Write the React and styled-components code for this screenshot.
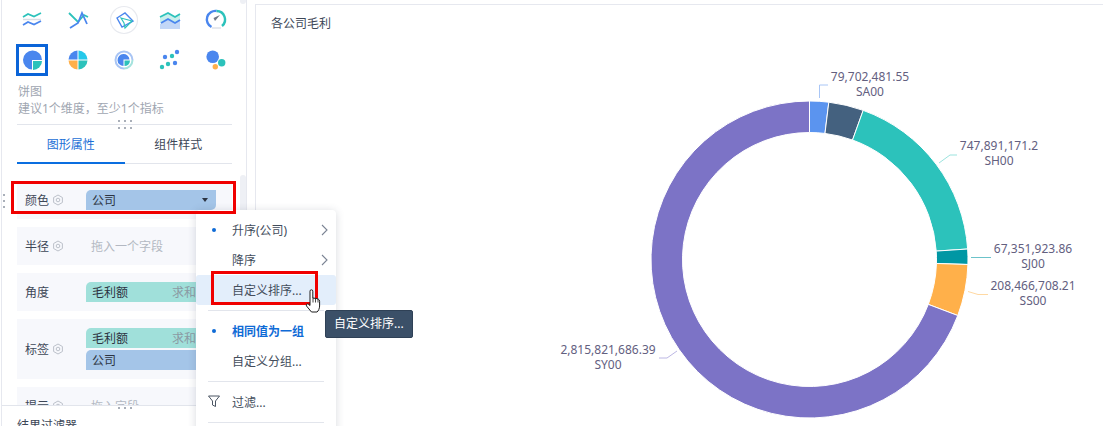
import React from 'react';
import styled, { createGlobalStyle } from 'styled-components';

const GlobalStyle = createGlobalStyle`
  html, body {
    margin: 0;
    padding: 0;
    background: #fff;
    font-family: "Noto Sans", "Noto Sans CJK SC", sans-serif;
    font-size: 12px;
    color: #333d4d;
  }
`;

const Page = styled.div`
  position: relative;
  display: flex;
  width: 1103px;
  height: 426px;
  overflow: hidden;
`;

const Panel = styled.aside`
  position: relative;
  display: flex;
  flex-direction: column;
  flex: none;
  box-sizing: border-box;
  width: 246px;
  height: 426px;
  margin-left: 1px;
  border-left: 1px solid #e6e8ef;
  border-right: 1px solid #e6e8ef;
`;

const IconGrid = styled.div`
  display: grid;
  grid-template-columns: repeat(5, 46px);
  grid-auto-rows: 40px;
  flex: none;
  padding-left: 7px;
`;

const IconCell = styled.div`
  display: flex;
  align-items: center;
  justify-content: center;
`;

const IconFrame = styled.div`
  display: flex;
  align-items: center;
  justify-content: center;
  box-sizing: border-box;
  width: 32px;
  height: 32px;
  border: ${p => (p.$selected ? '3px solid #0a64d8' : '0')};
`;

const Hint = styled.div`
  flex: none;
  padding: 3px 0 0 16px;
  line-height: 17px;
  color: #a0a6b1;
`;

const Divider = styled.div`
  flex: none;
  height: 1px;
  margin: 7px 14px 0 15px;
  background: #e2e5ec;
`;

const Tabs = styled.div`
  display: flex;
  flex: none;
  height: 39px;
  margin: 0 14px 0 15px;
  border-bottom: 1px solid #e2e5ec;
  box-sizing: border-box;
`;

const Tab = styled.div`
  flex: 1;
  margin-bottom: -1px;
  line-height: 39px;
  text-align: center;
  color: ${p => (p.$active ? '#1c6fd6' : '#3d4757')};
  border-bottom: 2px solid ${p => (p.$active ? '#0a6ee0' : 'transparent')};
`;

const Fields = styled.div`
  display: flex;
  flex: 1;
  flex-direction: column;
  gap: 8px;
  min-height: 0;
  padding-top: 17px;
  overflow: hidden;
`;

const FieldRow = styled.div`
  display: flex;
  flex: none;
  align-items: center;
  min-height: 20px;
  margin: 0 14px 0 15px;
  padding: 9px 0;
  background: #f7f8fc;
`;

const FieldLabel = styled.div`
  display: flex;
  flex: none;
  align-items: center;
  gap: 3px;
  box-sizing: border-box;
  width: 69px;
  padding-left: 8px;
  color: #3d4757;
`;

const PillStack = styled.div`
  display: flex;
  flex-direction: column;
  gap: 2px;
`;

const Pill = styled.div`
  display: flex;
  align-items: center;
  box-sizing: border-box;
  width: 130px;
  height: 20px;
  padding: 0 6px;
  border-radius: 5px 0 5px 0;
  background: ${p => (p.$kind === 'measure' ? '#a0e0da' : '#a4c5e8')};
  color: #2c3442;
`;

const PillSuffix = styled.span`
  margin-left: auto;
  padding-right: 14px;
  color: #8b9aa3;
`;

const Caret = styled.span`
  width: 0;
  height: 0;
  margin-left: auto;
  margin-right: 2px;
  border-left: 3px solid transparent;
  border-right: 3px solid transparent;
  border-top: 4px solid #2c3442;
`;

const Placeholder = styled.span`
  margin-left: 5px;
  color: #b3b8c2;
`;

const Footer = styled.div`
  flex: none;
  box-sizing: border-box;
  height: 21px;
  padding: 11px 0 0 15px;
  border-top: 1px solid #e2e5ec;
  background: #fff;
  line-height: 17px;
  color: #3d4757;
`;

const ScrollThumb = styled.div`
  position: absolute;
  left: 238px;
  top: ${p => p.$top}px;
  width: 6px;
  height: ${p => p.$height}px;
  border-radius: 3px;
  background: #eef0f5;
`;

const DotHandle = styled.div`
  position: absolute;
  left: ${p => p.$left}px;
  top: ${p => p.$top}px;
  display: flex;
  flex-direction: ${p => (p.$vertical ? 'column' : 'row')};
  gap: 4px;
  & > i {
    display: block;
    width: 2px;
    height: 2px;
    background: #a9afb9;
  }
`;

const Card = styled.main`
  flex: none;
  box-sizing: border-box;
  width: 860px;
  height: 440px;
  margin: 4px 0 0 8px;
  border: 1px solid #e6e8ef;
`;

const CardTitle = styled.div`
  height: 35px;
  padding: 10px 0 0 15px;
  box-sizing: border-box;
  line-height: 17px;
  color: #3d4757;
`;

const ChartSvg = styled.svg`
  display: block;
`;

const ChartLabel = styled.text`
  font-family: "Noto Sans", "Noto Sans CJK SC", sans-serif;
  font-size: 12px;
  fill: #63607f;
  text-anchor: middle;
`;

const Menu = styled.div`
  position: absolute;
  left: 196px;
  top: 210px;
  box-sizing: border-box;
  width: 140px;
  height: 230px;
  padding: 5px 0;
  border-radius: 4px;
  background: #fff;
  box-shadow: 0 1px 8px rgba(60, 70, 90, 0.2);
`;

const MenuItem = styled.div`
  position: relative;
  display: flex;
  align-items: center;
  height: 30px;
  padding-left: 36px;
  border-radius: 3px;
  background: ${p => (p.$hover ? '#e3eefb' : 'transparent')};
  color: ${p => (p.$on ? '#0f6bd6' : '#434d5c')};
  font-weight: ${p => (p.$on ? 700 : 400)};
`;

const MenuDot = styled.span`
  position: absolute;
  left: 16px;
  top: 13px;
  width: 4px;
  height: 4px;
  border-radius: 50%;
  background: #0f6bd6;
`;

const MenuLead = styled.span`
  position: absolute;
  left: 11px;
  top: 7px;
  display: flex;
`;

const MenuArrow = styled.span`
  position: absolute;
  left: 125px;
  top: 9px;
  display: flex;
`;

const MenuRule = styled.div`
  height: 1px;
  margin: 5px 12px 5px 12px;
  background: #e2e5ec;
`;

const Tip = styled.div`
  position: absolute;
  left: 325px;
  top: 310px;
  box-sizing: border-box;
  width: 88px;
  height: 28px;
  padding-left: 8px;
  border: 1px solid #2f4156;
  border-radius: 2px;
  background: #3b5068;
  color: #fff;
  line-height: 26px;
`;

const RedBox = styled.div`
  position: absolute;
  left: ${p => p.$left}px;
  top: ${p => p.$top}px;
  box-sizing: border-box;
  width: ${p => p.$width}px;
  height: ${p => p.$height}px;
  border: 3px solid #f00000;
`;

const CursorWrap = styled.div`
  position: absolute;
  left: 305px;
  top: 288px;
  display: flex;
`;

const Dots = ({ left, top, vertical }) => (
  <DotHandle $left={left} $top={top} $vertical={vertical}>
    <i /><i /><i />
  </DotHandle>
);

const Gear = () => (
  <svg width="12" height="12" viewBox="0 0 12 12" fill="none" stroke="#bcc1ca" strokeWidth="1">
    <path d="M6 1l4.400 2.500v5L6 11 1.600 8.500v-5z" />
    <circle cx="6" cy="6" r="1.800" />
  </svg>
);

const LineIcon = () => (
  <svg width="30" height="30" viewBox="0 0 30 30" fill="none" strokeWidth="1.800">
    <path d="M6 12l5-3 6 2.500 7-3.500" stroke="#2cc2bb" />
    <path d="M6 14.500h18" stroke="#d8dce4" strokeWidth="1.500" />
    <path d="M6 20l5-3 6 2.500 7-3.500" stroke="#4a86ee" />
  </svg>
);

const ParallelIcon = () => (
  <svg width="30" height="30" viewBox="0 0 30 30" fill="none" strokeWidth="1.800">
    <path d="M6 8l9 9 6-7 4 2" stroke="#2cc2bb" />
    <path d="M7 23l8-5 4-10 5 11" stroke="#4a86ee" />
  </svg>
);

const RadarIcon = () => (
  <svg width="30" height="30" viewBox="0 0 30 30" fill="none">
    <circle cx="15" cy="15" r="13.500" stroke="#e8eaef" strokeWidth="1.200" />
    <path d="M8 13l8-5 8 8-11 6z" stroke="#4a86ee" strokeWidth="1.400" />
    <path d="M12 13l11 3-7 7-1-5z" stroke="#2cc2bb" strokeWidth="1.200" />
  </svg>
);

const AreaIcon = () => (
  <svg width="30" height="30" viewBox="0 0 30 30" fill="none">
    <path d="M5 12l8-4 7 4 5-3v7l-5 2-7-4-8 4z" fill="#c8efec" />
    <path d="M5 19l8-5 7 4 5-3v9H5z" fill="#c2d7f7" />
    <path d="M5 12l8-4 7 4 5-3" stroke="#2cc2bb" strokeWidth="1.800" />
    <path d="M6 18l7-4 7 4 5-3" stroke="#4a86ee" strokeWidth="1.800" />
  </svg>
);

const GaugeIcon = () => (
  <svg width="30" height="30" viewBox="0 0 30 30" fill="none">
    <path d="M10.500 22A8.500 8.500 0 0 1 15.500 6" stroke="#4a86ee" strokeWidth="2.400" />
    <path d="M15.500 6a8.500 8.500 0 0 1 5.500 15" stroke="#2cc2bb" strokeWidth="2.400" />
    <path d="M19 10l-6.500 3 1.500 3z" fill="#6e7885" />
    <path d="M11 23h9" stroke="#dfe2e9" strokeWidth="1.500" />
  </svg>
);

const PieIcon = () => (
  <svg width="26" height="26" viewBox="0 0 26 26">
    <path d="M13 13v9.500A9.500 9.500 0 1 1 23 13z" fill="#4a86ee" />
    <path d="M14 14h9a9 9 0 0 1-9 9z" fill="#2cc2bb" />
  </svg>
);

const QuadIcon = () => (
  <svg width="30" height="30" viewBox="0 0 30 30">
    <path d="M14.500 14.500V5.500a9.500 9.500 0 0 0-9 9z" fill="#4a86ee" />
    <path d="M15.500 14.500V5.500a9.500 9.500 0 0 1 9 9z" fill="#25c8ea" />
    <path d="M14.500 15.500h-9a9.500 9.500 0 0 0 9 9z" fill="#ffb04a" />
    <path d="M15.500 15.500h9a9.500 9.500 0 0 1-9 9z" fill="#2cc2bb" />
  </svg>
);

const RingIcon = () => (
  <svg width="30" height="30" viewBox="0 0 30 30" fill="none">
    <path d="M15 6.500a8.500 8.500 0 1 0 0 17" stroke="#a9c5f4" strokeWidth="2" />
    <path d="M15 6.500a8.500 8.500 0 0 1 8.500 8.500" stroke="#a9c5f4" strokeWidth="2" />
    <path d="M23.500 15a8.500 8.500 0 0 1-8.500 8.500" stroke="#a5e3de" strokeWidth="2" />
    <path d="M14.500 15.500V21a6 6 0 1 1 6-6.500h-6z" fill="#4a86ee" />
    <path d="M15.500 15.500H21a5.500 5.500 0 0 1-5.500 5.500z" fill="#2cc2bb" />
  </svg>
);

const ScatterIcon = () => (
  <svg width="30" height="30" viewBox="0 0 30 30">
    <circle cx="7" cy="22" r="2.200" fill="#2cc2bb" />
    <circle cx="13" cy="19" r="2.200" fill="#2cc2bb" />
    <circle cx="20" cy="18" r="2.200" fill="#4a86ee" />
    <circle cx="10" cy="12" r="2.200" fill="#4a86ee" />
    <circle cx="17" cy="11" r="2.200" fill="#2cc2bb" />
    <circle cx="22" cy="7" r="2.200" fill="#4a86ee" />
  </svg>
);

const BubbleIcon = () => (
  <svg width="30" height="30" viewBox="0 0 30 30">
    <circle cx="11.700" cy="11.700" r="6.300" fill="#4a86ee" />
    <circle cx="20.700" cy="17.700" r="3.700" fill="#2cc2bb" />
    <circle cx="14.300" cy="21.700" r="2.700" fill="#ffb04a" />
  </svg>
);

const FilterIcon = () => (
  <svg width="14" height="14" viewBox="0 0 14 14" fill="none" stroke="#4b5563" strokeWidth="1">
    <path d="M1.500 2h11L8.500 7v5.500l-3-1.500V7z" />
  </svg>
);

const ArrowIcon = () => (
  <svg width="7" height="12" viewBox="0 0 7 12" fill="none" stroke="#7b8494" strokeWidth="1.100">
    <path d="M1 1l5 5-5 5" />
  </svg>
);

const HandCursor = () => (
  <svg width="18" height="26" viewBox="0 0 18 26" fill="#fff" stroke="#1c1c1c" strokeWidth="1">
    <path d="M5 13V3.200a1.400 1.400 0 0 1 2.800 0V10l2.200.3c3 .5 4.600.8 4.600 3.200v4.500c0 2.500-1.300 5-2.500 6H6.500L1.500 18c-.8-1.300.6-2.700 1.800-1.800L5 17.500z" />
    <path d="M8 10v4.500M10.500 10.500v4M13 11v3.500" strokeWidth="0.800" />
  </svg>
);

const cx = 809.5;
const cy = 259.5;
const outerR = 158.5;
const innerR = 127;

// angles read off the ring, clockwise from 12 o'clock
const slices = [
  { from: 0, to: 7, color: '#5b94ef' },
  { from: 7, to: 19.8, color: '#44617f' },
  { from: 19.8, to: 86.2, color: '#2cc2bb' },
  { from: 86.2, to: 91.8, color: '#0097a4' },
  { from: 91.8, to: 110.7, color: '#ffb04a' },
  { from: 110.7, to: 360, color: '#7c73c6' },
];

const pt = (r, deg) => {
  const a = (deg * Math.PI) / 180;
  return `${(cx + r * Math.sin(a)).toFixed(2)} ${(cy - r * Math.cos(a)).toFixed(2)}`;
};

const slicePath = ({ from, to }) => {
  const large = to - from > 180 ? 1 : 0;
  return `M${pt(outerR, from)}A${outerR} ${outerR} 0 ${large} 1 ${pt(outerR, to)}L${pt(innerR, to)}A${innerR} ${innerR} 0 ${large} 0 ${pt(innerR, from)}Z`;
};

const labels = [
  { x: 870, y: 81, value: '79,702,481.55', name: 'SA00' },
  { x: 999, y: 150, value: '747,891,171.2', name: 'SH00' },
  { x: 1033, y: 253, value: '67,351,923.86', name: 'SJ00' },
  { x: 1033, y: 290, value: '208,466,708.21', name: 'SS00' },
  { x: 608, y: 354, value: '2,815,821,686.39', name: 'SY00' },
];

const leaders = [
  { d: 'M819.5 98V85H828', color: '#a9c6f6' },
  { d: 'M939 163L950 155H957', color: '#9be3de' },
  { d: 'M971 257.500H991', color: '#6cc3ca' },
  { d: 'M968 291.500L978 294.500H988', color: '#ffd9a3' },
  { d: 'M677 351L667 358H659', color: '#bcb7e4' },
];

const Donut = () => (
  <ChartSvg width="847" height="386" viewBox="256 40 847 386">
    {slices.map(s => (
      <path key={s.from} d={slicePath(s)} fill={s.color} stroke="#fff" strokeWidth="1" />
    ))}
    {leaders.map(l => (
      <path key={l.d} d={l.d} fill="none" stroke={l.color} strokeWidth="1" />
    ))}
    {labels.map(l => (
      <ChartLabel key={l.name} x={l.x} y={l.y}>
        <tspan x={l.x}>{l.value}</tspan>
        <tspan x={l.x} dy="14.500">{l.name}</tspan>
      </ChartLabel>
    ))}
  </ChartSvg>
);

export default function App() {
  return (
    <Page>
      <GlobalStyle />
      <Panel>
        <IconGrid>
          <IconCell><LineIcon /></IconCell>
          <IconCell><ParallelIcon /></IconCell>
          <IconCell><RadarIcon /></IconCell>
          <IconCell><AreaIcon /></IconCell>
          <IconCell><GaugeIcon /></IconCell>
          <IconCell><IconFrame $selected><PieIcon /></IconFrame></IconCell>
          <IconCell><QuadIcon /></IconCell>
          <IconCell><RingIcon /></IconCell>
          <IconCell><ScatterIcon /></IconCell>
          <IconCell><BubbleIcon /></IconCell>
        </IconGrid>
        <Hint>
          饼图<br />
          建议1个维度，至少1个指标
        </Hint>
        <Divider />
        <Tabs>
          <Tab $active>图形属性</Tab>
          <Tab>组件样式</Tab>
        </Tabs>
        <Fields>
          <FieldRow>
            <FieldLabel>颜色 <Gear /></FieldLabel>
            <Pill>公司<Caret /></Pill>
          </FieldRow>
          <FieldRow>
            <FieldLabel>半径 <Gear /></FieldLabel>
            <Placeholder>拖入一个字段</Placeholder>
          </FieldRow>
          <FieldRow>
            <FieldLabel>角度</FieldLabel>
            <Pill $kind="measure">毛利额<PillSuffix>求和</PillSuffix></Pill>
          </FieldRow>
          <FieldRow>
            <FieldLabel>标签 <Gear /></FieldLabel>
            <PillStack>
              <Pill $kind="measure">毛利额<PillSuffix>求和</PillSuffix></Pill>
              <Pill>公司</Pill>
            </PillStack>
          </FieldRow>
          <FieldRow>
            <FieldLabel>提示 <Gear /></FieldLabel>
            <Placeholder>拖入字段</Placeholder>
          </FieldRow>
        </Fields>
        <Footer>结果过滤器</Footer>
        <ScrollThumb $top={-4} $height={8} />
        <ScrollThumb $top={175} $height={60} />
        <Dots left={116} top={120} />
        <Dots left={116} top={127} />
        <Dots left={1} top={194} vertical />
        <Dots left={116} top={407} />
      </Panel>
      <Card>
        <CardTitle>各公司毛利</CardTitle>
        <Donut />
      </Card>
      <Menu>
        <MenuItem><MenuDot />升序(公司)<MenuArrow><ArrowIcon /></MenuArrow></MenuItem>
        <MenuItem>降序<MenuArrow><ArrowIcon /></MenuArrow></MenuItem>
        <MenuItem $hover>自定义排序...</MenuItem>
        <MenuRule />
        <MenuItem $on><MenuDot />相同值为一组</MenuItem>
        <MenuItem>自定义分组...</MenuItem>
        <MenuRule />
        <MenuItem><MenuLead><FilterIcon /></MenuLead>过滤...</MenuItem>
        <MenuRule />
      </Menu>
      <Tip>自定义排序...</Tip>
      <RedBox $left={11} $top={181} $width={225} $height={33} />
      <RedBox $left={211} $top={271} $width={107} $height={34} />
      <CursorWrap><HandCursor /></CursorWrap>
    </Page>
  );
}
